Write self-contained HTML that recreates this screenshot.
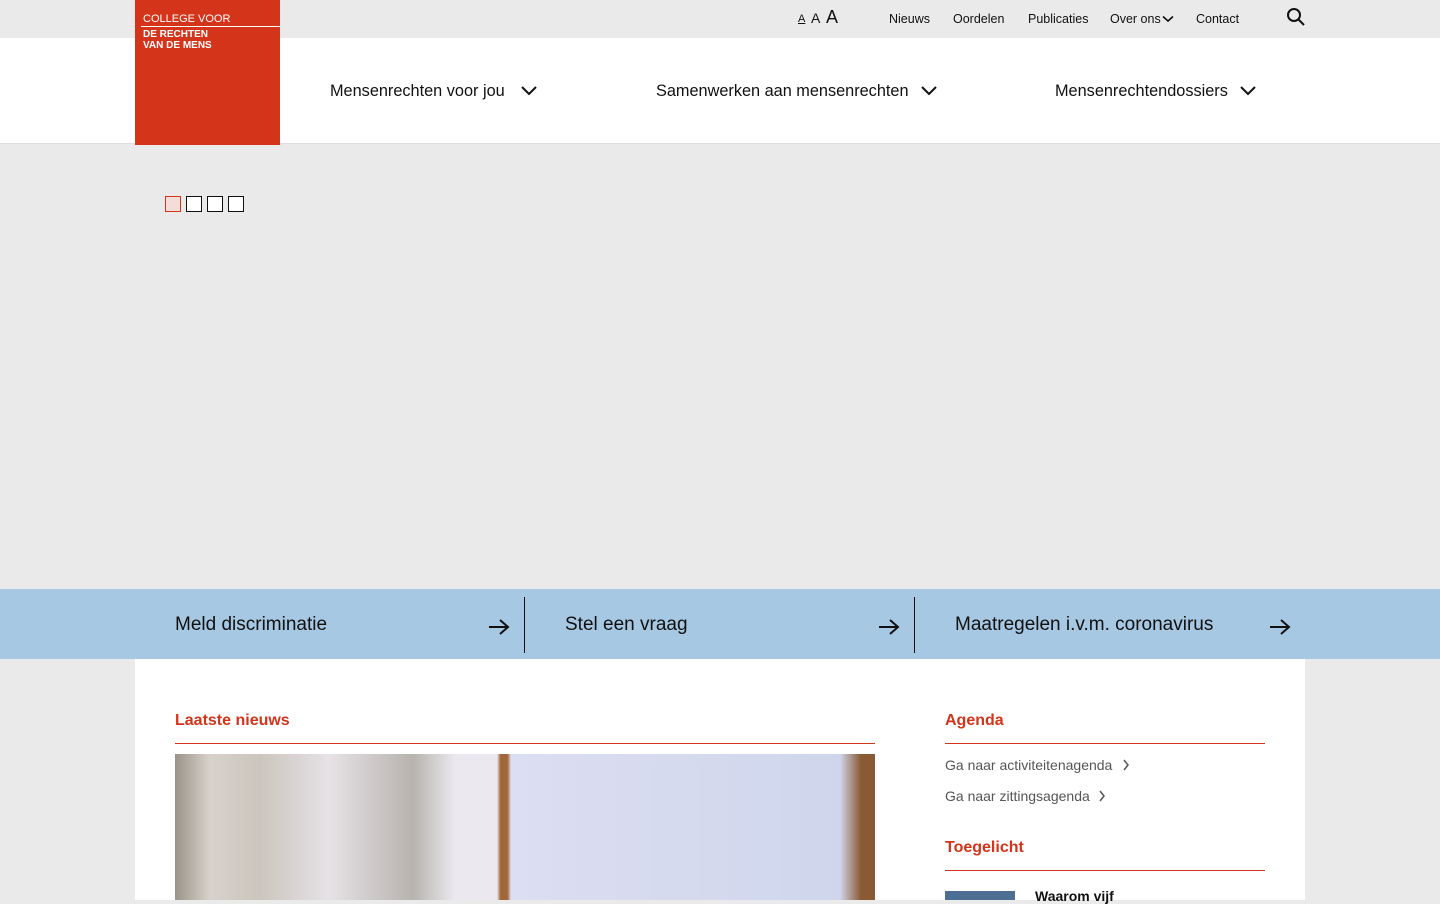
<!DOCTYPE html>
<html><head><meta charset="utf-8"><style>
*{margin:0;padding:0;box-sizing:border-box}
body{width:1440px;height:900px;overflow:hidden;background:#eaeaea;font-family:"Liberation Sans",sans-serif;position:relative;color:#111}
.abs{position:absolute}
.top{top:0;left:0;width:1440px;height:38px;background:#eaeaea}
.nav{top:38px;left:0;width:1440px;height:106px;background:#fff;border-bottom:1px solid #ddd}
.logo{left:135px;top:0;width:145px;height:145px;background:#d4341a;color:#fff}
.tl{font-size:12.5px;top:12px}
.mn{font-size:16.3px;top:82px}
.qb{top:589px;left:0;width:1440px;height:70px;background:#a7c8e2}
.qt{font-size:19px;top:614px}
.sep{top:597px;width:1px;height:56px;background:#111}
.main{left:135px;top:659px;width:1170px;height:241px;background:#fff}
.h{color:#d4341a;font-weight:bold;font-size:16px}
.rl{height:1px;background:#d4341a}
.lnk{font-size:14px;color:#555}
</style></head><body>
<div class="abs top"></div>
<div class="abs nav"></div>
<div class="abs logo">
<div class="abs" style="left:8px;top:13px;font-size:11px">COLLEGE VOOR</div>
<div class="abs" style="left:6px;top:26px;width:139px;height:1px;background:#fff"></div>
<div class="abs" style="left:8px;top:29px;font-size:10px;font-weight:bold;line-height:11px">DE RECHTEN<br>VAN DE MENS</div>
</div>
<div class="abs" style="left:798px;top:13px;font-size:11px;text-decoration:underline">A</div>
<div class="abs" style="left:811px;top:10px;font-size:14px">A</div>
<div class="abs" style="left:826px;top:7px;font-size:18px">A</div>
<div class="abs tl" style="left:889px">Nieuws</div>
<div class="abs tl" style="left:953px">Oordelen</div>
<div class="abs tl" style="left:1028px">Publicaties</div>
<div class="abs tl" style="left:1110px">Over ons</div>
<svg class="abs" style="left:1162px;top:15px" width="12" height="8"><path d="M1 1.5l5 4.5 5-4.5" fill="none" stroke="#111" stroke-width="1.6"/></svg>
<div class="abs tl" style="left:1196px">Contact</div>
<svg class="abs" style="left:1286px;top:7px" width="20" height="20"><circle cx="8" cy="8" r="6" fill="none" stroke="#111" stroke-width="2"/><path d="M12.5 12.5L18 18" stroke="#111" stroke-width="2"/></svg>
<div class="abs mn" style="left:330px">Mensenrechten voor jou</div>
<div class="abs mn" style="left:656px">Samenwerken aan mensenrechten</div>
<div class="abs mn" style="left:1055px">Mensenrechtendossiers</div>
<svg class="abs" style="left:520px;top:85px" width="18" height="12"><path d="M2 2l7 7 7-7" fill="none" stroke="#111" stroke-width="2"/></svg>
<svg class="abs" style="left:920px;top:85px" width="18" height="12"><path d="M2 2l7 7 7-7" fill="none" stroke="#111" stroke-width="2"/></svg>
<svg class="abs" style="left:1239px;top:85px" width="18" height="12"><path d="M2 2l7 7 7-7" fill="none" stroke="#111" stroke-width="2"/></svg>
<div class="abs" style="left:165px;top:196px;width:16px;height:16px;border:1px solid #d4341a;background:#f4ddd8"></div>
<div class="abs" style="left:186px;top:196px;width:16px;height:16px;border:1px solid #111;background:#fff"></div>
<div class="abs" style="left:207px;top:196px;width:16px;height:16px;border:1px solid #111;background:#fff"></div>
<div class="abs" style="left:228px;top:196px;width:16px;height:16px;border:1px solid #111;background:#fff"></div>
<div class="abs qb"></div>
<div class="abs qt" style="left:175px">Meld discriminatie</div>
<div class="abs qt" style="left:565px">Stel een vraag</div>
<div class="abs qt" style="left:955px">Maatregelen i.v.m. coronavirus</div>
<div class="abs sep" style="left:524px"></div><div class="abs sep" style="left:914px"></div>
<svg class="abs" style="left:488px;top:618px" width="22" height="18"><path d="M1 9h19M12 2l8 7-8 7" fill="none" stroke="#111" stroke-width="2"/></svg>
<svg class="abs" style="left:878px;top:618px" width="22" height="18"><path d="M1 9h19M12 2l8 7-8 7" fill="none" stroke="#111" stroke-width="2"/></svg>
<svg class="abs" style="left:1269px;top:618px" width="22" height="18"><path d="M1 9h19M12 2l8 7-8 7" fill="none" stroke="#111" stroke-width="2"/></svg>
<div class="abs main"></div>
<div class="abs h" style="left:175px;top:712px">Laatste nieuws</div>
<div class="abs rl" style="left:175px;top:743px;width:700px"></div>
<div class="abs" style="left:175px;top:754px;width:700px;height:146px;background:linear-gradient(90deg,#9a9388 0%,#d8d2cc 5%,#cbc5bd 12%,#e6e2e6 22%,#b8b3ae 34%,#ebe9ef 40%,#ebe9ef 46%,#a0683a 46.5%,#a0683a 47.5%,#dcdef2 48%,#cfd6ec 95%,#8a5a35 98%)"></div>
<div class="abs h" style="left:945px;top:712px">Agenda</div>
<div class="abs rl" style="left:945px;top:743px;width:320px"></div>
<div class="abs lnk" style="left:945px;top:757px">Ga naar activiteitenagenda</div>
<svg class="abs" style="left:1122px;top:759px" width="8" height="12"><path d="M2 1l4 5-4 5" fill="none" stroke="#555" stroke-width="1.5"/></svg>
<div class="abs lnk" style="left:945px;top:788px">Ga naar zittingsagenda</div>
<svg class="abs" style="left:1098px;top:790px" width="8" height="12"><path d="M2 1l4 5-4 5" fill="none" stroke="#555" stroke-width="1.5"/></svg>
<div class="abs h" style="left:945px;top:839px">Toegelicht</div>
<div class="abs rl" style="left:945px;top:870px;width:320px"></div>
<div class="abs" style="left:945px;top:891px;width:70px;height:9px;background:#4d6f94"></div>
<div class="abs" style="left:1035px;top:888px;font-size:14px;font-weight:bold">Waarom vijf</div>
</body></html>
